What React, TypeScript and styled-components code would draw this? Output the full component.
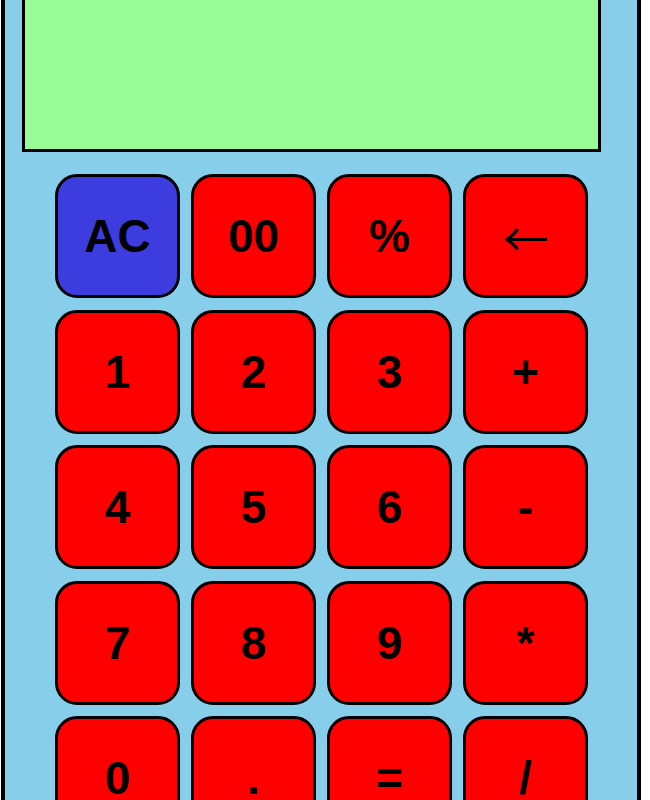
import React from "react";
import styled, { createGlobalStyle } from "styled-components";

const GlobalStyle = createGlobalStyle`
  html, body {
    margin: 0;
    padding: 0;
    background: #ffffff;
    overflow: hidden;
  }
`;

const Page = styled.div`
  height: 100vh;
  display: flex;
  align-items: center;
  justify-content: flex-start;
  padding-left: 1px;
`;

const Calculator = styled.div`
  box-sizing: border-box;
  width: 640px;
  flex-shrink: 0;
  background: #87ceeb;
  border: 4px solid #000;
  padding: 20px 0 20px 17px;
  display: flex;
  flex-direction: column;
  align-items: flex-start;
  gap: 22px;
`;

const Display = styled.div`
  box-sizing: border-box;
  width: 579px;
  height: 192px;
  background: #98fb98;
  border: 3px solid #000;
`;

const Keypad = styled.div`
  align-self: center;
  margin-left: -16px;
  display: grid;
  grid-template-columns: repeat(4, 125px);
  grid-auto-rows: 124px;
  column-gap: 11px;
  row-gap: 11.5px;
`;

const Key = styled.button<{ $variant?: "clear" | "normal"; $symbol?: boolean }>`
  box-sizing: border-box;
  margin: 0;
  padding: 0;
  border: 3px solid #000;
  border-radius: 22px;
  background: ${(p) => (p.$variant === "clear" ? "#3c3cdf" : "#ff0000")};
  color: #000;
  font-family: ${(p) =>
    p.$symbol
      ? '"Noto Sans CJK SC", sans-serif'
      : '"Liberation Sans", Arial, sans-serif'};
  font-size: 46px;
  font-weight: ${(p) => (p.$symbol ? 400 : 700)};
  display: flex;
  align-items: center;
  justify-content: center;
  cursor: pointer;
`;

const keys: { label: string; variant?: "clear" | "normal"; symbol?: boolean }[] = [
  { label: "AC", variant: "clear" },
  { label: "00" },
  { label: "%" },
  { label: "←", symbol: true },
  { label: "1" },
  { label: "2" },
  { label: "3" },
  { label: "+" },
  { label: "4" },
  { label: "5" },
  { label: "6" },
  { label: "-" },
  { label: "7" },
  { label: "8" },
  { label: "9" },
  { label: "*" },
  { label: "0" },
  { label: "." },
  { label: "=" },
  { label: "/" },
];

export default function App() {
  return (
    <>
      <GlobalStyle />
      <Page>
        <Calculator>
          <Display />
          <Keypad>
            {keys.map((k) => (
              <Key key={k.label} $variant={k.variant} $symbol={k.symbol}>
                {k.label}
              </Key>
            ))}
          </Keypad>
        </Calculator>
      </Page>
    </>
  );
}
